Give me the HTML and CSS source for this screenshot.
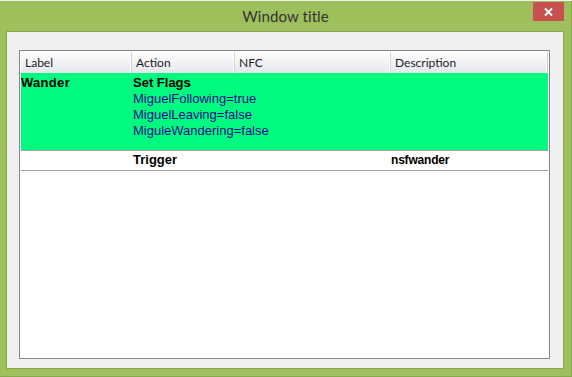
FILE: index.html
```html
<!DOCTYPE html>
<html>
<head>
<meta charset="utf-8">
<title>Window title</title>
<link rel="stylesheet" href="styles.css">
</head>
<body>
<div class="window">
  <div class="titlebar">
    <span class="spacer"></span>
    <span class="title">Window title</span>
    <span class="close"><svg width="9" height="8" viewBox="0 0 9 8"><path d="M1 0.5 L8 7.5 M8 0.5 L1 7.5" stroke="#fff" stroke-width="2" fill="none"/></svg></span>
  </div>
  <div class="client">
    <div class="listview">
      <div class="header">
        <div class="hcell">Label</div>
        <div class="hcell">Action</div>
        <div class="hcell">NFC</div>
        <div class="hcell last">Description</div>
      </div>
      <div class="row selected">
        <div class="cell bold label">Wander</div>
        <div class="cell action">
          <div class="bold">Set Flags</div>
          <div class="flag">MiguelFollowing=true</div>
          <div class="flag">MiguelLeaving=false</div>
          <div class="flag">MiguleWandering=false</div>
        </div>
        <div class="cell"></div>
        <div class="cell"></div>
      </div>
      <div class="row plain">
        <div class="cell"></div>
        <div class="cell action bold">Trigger</div>
        <div class="cell"></div>
        <div class="cell bold desc">nsfwander</div>
      </div>
    </div>
  </div>
</div>
</body>
</html>
```
FILE: styles.css
```css
html, body {
  margin: 0;
  padding: 0;
}
body {
  background: #f0f0f0;
  width: 572px;
  height: 377px;
  overflow: hidden;
}
.window {
  margin-top: 1px;
  width: 571px;
  height: 375px;
  background: #9dc05c;
  border-right: 1px solid #86a94d;
  border-bottom: 1px solid #86a94d;
}
.titlebar {
  height: 30px;
  display: grid;
  grid-template-columns: 1fr auto 1fr;
  align-items: start;
}
.title {
  font-family: Lato, "Noto Sans", sans-serif;
  font-size: 15px;
  line-height: 30px;
  color: #333;
  letter-spacing: 0.1px;
}
.close {
  justify-self: end;
  margin-top: 1px;
  margin-right: 7px;
  width: 31px;
  height: 19px;
  background: #c75050;
  display: flex;
  align-items: center;
  justify-content: center;
}
.close svg {
  display: block;
}
.client {
  margin-left: 6px;
  border: 1px solid #86a94d;
  background: #f0f0f0;
  padding: 18px 13px 9px 12px;
  box-sizing: border-box;
  width: 558px;
  height: 338px;
}
.listview {
  width: 531px;
  height: 309px;
  box-sizing: border-box;
  border: 1px solid #828790;
  padding: 1px;
  background: #fff;
  font-family: "Liberation Sans", Arial, sans-serif;
  font-size: 13px;
  line-height: 16px;
}
.header,
.row {
  display: grid;
  grid-template-columns: 111px 103px 156px 157px;
}
.header {
  height: 21px;
  background: linear-gradient(#ffffff, #f3f3f5 45%, #e4e6ea);
}
.hcell {
  font-family: Lato, "Noto Sans", sans-serif;
  font-size: 12px;
  line-height: 21px;
  color: #1e1e2a;
  padding-left: 4px;
  border-right: 1px solid #d5d5d8;
  box-shadow: inset -1px 0 0 #ffffff;
}
.hcell.last {
  border-right: 1px solid #c5c7cc;
}
.row.selected {
  background: #00fa80;
  height: 78px;
  box-sizing: border-box;
  padding-top: 2px;
  border-bottom: 1px solid #a0a0a0;
}
.row.plain {
  height: 20px;
  box-sizing: border-box;
  padding-top: 1px;
  border-bottom: 1px solid #a0a0a0;
}
.cell {
  color: #000;
}
.action {
  padding-left: 1px;
}
.bold {
  font-weight: bold;
}
.label {
  letter-spacing: 0.3px;
}
.desc {
  font-size: 12px;
  letter-spacing: -0.2px;
}
.flag {
  color: #0a0a8c;
}
```
